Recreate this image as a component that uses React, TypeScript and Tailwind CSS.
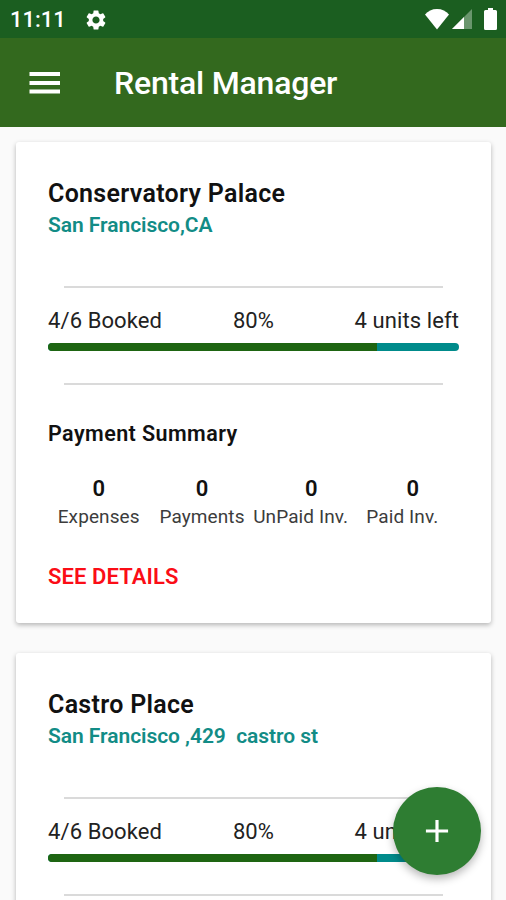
import { MdAdd, MdSettings } from "react-icons/md";

type Property = {
  name: string;
  address: string;
  summary?: { expenses: number; payments: number; unpaid: number; paid: number };
};

const properties: Property[] = [
  {
    name: "Conservatory Palace",
    address: "San Francisco,CA",
    summary: { expenses: 0, payments: 0, unpaid: 0, paid: 0 },
  },
  { name: "Castro Place", address: "San Francisco ,429  castro st" },
];

const StatusBar = () => {
  return (
    <div className="flex h-[38px] items-center bg-[#1b5e20] pl-[10px] pr-[9px] text-white">
      <span className="w-[74px] pt-[2px] text-[22px] font-medium leading-[38px]">
        11:11
      </span>
      <MdSettings className="mt-[2px] size-6" />
      <svg className="ml-auto mr-[3px] h-[21px] w-6" viewBox="0 0 24 21">
        <path d="M12 20.500 0 5.500C3 2 7 0 12 0S21 2 24 5.500z" fill="#fff" />
      </svg>
      <svg className="mr-3 h-5 w-5" viewBox="0 0 20 20">
        <path d="M20 0v20H0z" fill="#fff" opacity=".35" />
        <path d="M12 8v12H0z" fill="#fff" />
      </svg>
      <svg className="h-[22px] w-[13px]" viewBox="0 0 13 22">
        <path
          d="M4 0h5v2h2.500q1.500 0 1.500 1.500v17q0 1.500-1.500 1.500h-10Q0 22 0 20.500v-17Q0 2 1.500 2H4z"
          fill="#fff"
        />
      </svg>
    </div>
  );
};

const AppBar = () => {
  return (
    <header className="flex h-[89px] items-center bg-[#33691e] pl-[29px] text-white">
      <button className="mr-[53px]">
        <svg className="h-[22px] w-8" viewBox="0 0 32 22">
          <path d="M.5 0h30.500v4H.5zM.5 9h30.500v4H.5zM.5 17.500h30.500v4H.5z" fill="#fff" />
        </svg>
      </button>
      <h1 className="whitespace-nowrap text-[32px] font-medium leading-10 tracking-[-0.2px]">
        Rental Manager
      </h1>
    </header>
  );
};

const Divider = () => {
  return <div className="mx-4 h-[2px] bg-[#dadada]" />;
};

// the count sits right of the label's centre in the last two columns
const Stat = ({
  label,
  value,
  className,
  valueClassName = "",
}: {
  label: string;
  value: number;
  className: string;
  valueClassName?: string;
}) => {
  return (
    <div className={`flex flex-col items-center whitespace-nowrap ${className}`}>
      <span
        className={`text-[22px] font-semibold leading-[29px] ${valueClassName}`}
      >
        {value}
      </span>
      <span className="text-[19px] leading-7 tracking-[0.1px] text-[#3c3c3c]">
        {label}
      </span>
    </div>
  );
};

const PaymentSummary = ({
  summary,
}: {
  summary: NonNullable<Property["summary"]>;
}) => {
  return (
    <>
      <h3 className="mt-[33px] whitespace-nowrap text-[21.5px] font-semibold leading-8 tracking-[0.43px]">
        Payment Summary
      </h3>
      <div className="mt-[24px] flex pl-px">
        <Stat label="Expenses" value={summary.expenses} className="w-[100px]" />
        <Stat label="Payments" value={summary.payments} className="w-[108px]" />
        <Stat
          label="UnPaid Inv."
          value={summary.unpaid}
          className="w-[90px]"
          valueClassName="pl-[21px]"
        />
        <Stat
          label="Paid Inv."
          value={summary.paid}
          className="w-[114px]"
          valueClassName="pl-[21px]"
        />
      </div>
      <button className="mt-[30px] whitespace-nowrap text-[22px] font-semibold leading-8 tracking-[0.1px] text-[#fb0d16]">
        SEE DETAILS
      </button>
    </>
  );
};

const PropertyCard = ({ property }: { property: Property }) => {
  return (
    <div className="h-[481px] shrink-0 rounded-[3px] bg-white px-8 pt-[36px] text-[#111] shadow-[0_2px_5px_rgba(0,0,0,0.28)]">
      <h2 className="whitespace-nowrap text-[25px] font-semibold leading-8 tracking-[0.3px]">
        {property.name}
      </h2>
      <p className="mb-[45px] mt-[-1px] whitespace-pre text-[21px] font-semibold leading-8 tracking-[-0.05px] text-[#128c86]">
        {property.address}
      </p>
      <Divider />
      <div className="mt-[17px] flex whitespace-nowrap text-[22px] leading-8 text-[#222]">
        <span className="w-[185px] tracking-[0.1px]">4/6 Booked</span>
        <span>80%</span>
        <span className="ml-auto tracking-[0.1px]">4 units left</span>
      </div>
      <div className="mb-[32px] mt-[6px] flex h-2 overflow-hidden rounded-full bg-[#008b8b]">
        <div className="w-4/5 bg-[#1e6512]" />
      </div>
      <Divider />
      {property.summary && <PaymentSummary summary={property.summary} />}
    </div>
  );
};

export default function App() {
  return (
    <div className="relative flex h-[900px] w-[506px] flex-col overflow-hidden bg-[#fafafa] font-[Roboto,sans-serif]">
      <StatusBar />
      <AppBar />
      <main className="flex min-h-0 flex-1 flex-col gap-[30px] overflow-hidden pl-4 pr-[15px] pt-[15px]">
        {properties.map((property) => (
          <PropertyCard key={property.name} property={property} />
        ))}
      </main>
      <button className="absolute bottom-[25px] right-[25px] flex size-[88px] items-center justify-center rounded-full bg-[#2e7d32] text-white shadow-[0_4px_8px_rgba(0,0,0,0.28)]">
        <MdAdd className="size-[38px]" />
      </button>
    </div>
  );
}
